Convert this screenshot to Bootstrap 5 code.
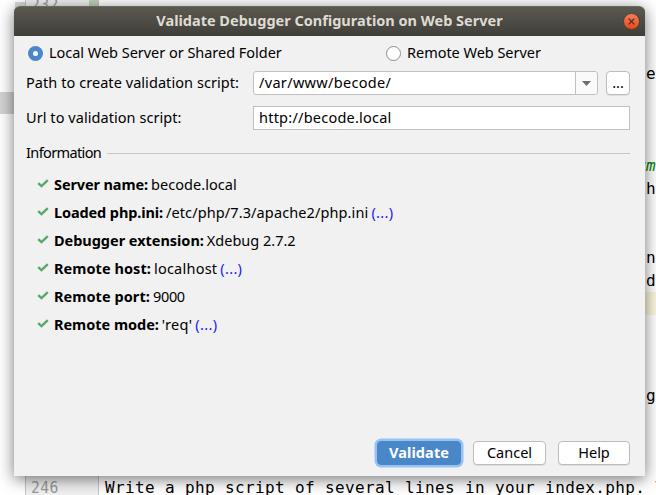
<!DOCTYPE html>
<html lang="en">
<head>
<meta charset="utf-8">
<title>Validate Debugger Configuration on Web Server</title>
<link href="https://cdn.jsdelivr.net/npm/bootstrap@5.3.0/dist/css/bootstrap.min.css" rel="stylesheet">
<style>
  body { width: 656px; height: 495px; background: #fff; color: #000; font: 14.5px/20px "Noto Sans", "Open Sans", sans-serif; }
  .editor { height: 495px; font: 16px/23px "DejaVu Sans Mono", monospace; letter-spacing: .37px; }
  .strip { width: 25px; flex: none; }
  .strip-cap { width: 10px; height: 6px; margin: 2px 0 0 15px; background: #d8d8d8; }
  .strip-thumb { width: 14px; height: 22px; margin-top: 84px; background: #d2d2d2; }
  .code-lines { margin-top: -7px; width: 631px; flex: none; }
  .line { height: 23px; flex: none; white-space: pre; }
  .line-no { width: 74px; padding-left: 5px; background: #f0f0f0; border: solid #c4c4c4; border-width: 0 1px; color: #999; flex: none; }
  .line-no span { display: inline-block; transform: scaleX(.92); transform-origin: left; }
  .line-no.changed { background: linear-gradient(90deg, #f0f0f0 63px, #bdd4b8 63px); }
  .line-text { padding-left: 6px; }
  .line.current .line-text { background: #fcf6dc; }
  .doc { color: #008000; font-style: italic; }

  .dialog-window { left: 14px; top: 6px; width: 631px; height: 470px; background: #f1f1f1; border-radius: 6px 6px 0 0; box-shadow: 0 3px 16px rgba(0,0,0,.55); }
  .titlebar { height: 30px; background: linear-gradient(#5b594f, #3f3e39); border-top: 1px solid #69675d; border-radius: 6px 6px 0 0; color: #dfdbd2; }
  .titlebar span { margin-top: -3px; }
  .titlebar .close-btn { right: 5px; top: 6px; width: 17px; height: 17px; }
  .form-area { padding: 0 15px 0 12px; }
  .choices { height: 35px; padding-left: 2px; }
  .choice { gap: 6px; }
  .fields > span, .section-title span, .check-row span, .check-row b { margin-top: -2px; }
  .choice span { margin-top: -3px; }
  .choice.first { width: 358px; }
  .fields { display: grid; grid-template-columns: 227px 1fr; row-gap: 11px; }
  .field { height: 24px; border: 1px solid #c0c0c0; background: #fff; padding-left: 5px; line-height: 20px; }
  .combo { border-radius: 3px; width: 345px; }
  .combo-arrow { width: 22px; border-left: 1px solid #c0c0c0; background: #fafafa; border-radius: 0 3px 3px 0; }
  .push { height: 24px; padding: 0 0 2px; border: 1px solid #bcbcbc; border-radius: 4px; background: #fff; color: #000; font-size: 14.5px; line-height: 20px; box-shadow: 0 1px 0 #dfdfdf; }
  .push.browse { width: 24px; }
  .push.primary { width: 84px; background: #4a87c8; border-color: #4a87c8; color: #fff; font-weight: 700; box-shadow: 0 0 0 2.5px #97c3f3; }
  .push.cancel { width: 73px; }
  .push.help { width: 72px; }
  .section-title { margin-top: 13px; height: 20px; gap: 6px; }
  .section-title .rule { height: 1px; background: #c6c6c6; }
  .checks { margin-top: 8px; padding-left: 11px; }
  .check-row { height: 28px; padding-bottom: 1px; }
  .check-row svg { margin: 0 5px 2px 0; }
  .check-row b { margin-right: 3px; }
  .check-row .more { color: #1a1af5; margin-left: 3px; letter-spacing: .33px; }
  .actions { right: 15px; bottom: 11px; gap: 12px; }
  .t-xtight { letter-spacing: -.62px; }
  .t-num { letter-spacing: -.3px; }
  .t-tight { letter-spacing: -.11px; }
  .t-snug { letter-spacing: -.03px; }
  .t-open { letter-spacing: .06px; }
  .t-wide { letter-spacing: .11px; }
  .t-wider { letter-spacing: .23px; }
  .t-path { letter-spacing: .32px; }
</style>
<script src="https://cdn.jsdelivr.net/npm/bootstrap@5.3.0/dist/js/bootstrap.bundle.min.js"></script>
</head>
<body class="position-relative overflow-hidden">
<svg class="d-none"><symbol id="tick" viewBox="0 0 12 10"><path d="M1.2 4.2 4.5 7.2 10.8 1.2" fill="none" stroke="#59a869" stroke-width="2.4"/></symbol></svg>

<div class="editor d-flex overflow-hidden">
  <div class="strip"><div class="strip-cap"></div><div class="strip-thumb"></div></div>
  <div class="code-lines">
    <div class="line d-flex"><div class="line-no changed"><span>232</span></div></div>
    <div class="line d-flex"><div class="line-no"></div></div>
    <div class="line d-flex"><div class="line-no"></div></div>
    <div class="line d-flex"><div class="line-no"></div><div class="line-text flex-grow-1 text-end">e</div></div>
    <div class="line d-flex"><div class="line-no"></div></div>
    <div class="line d-flex"><div class="line-no"></div></div>
    <div class="line d-flex"><div class="line-no"></div></div>
    <div class="line d-flex"><div class="line-no"></div><div class="line-text flex-grow-1 text-end doc">rm</div></div>
    <div class="line d-flex"><div class="line-no"></div><div class="line-text flex-grow-1 text-end">th</div></div>
    <div class="line d-flex"><div class="line-no"></div></div>
    <div class="line d-flex"><div class="line-no"></div></div>
    <div class="line d-flex"><div class="line-no"></div><div class="line-text flex-grow-1 text-end">n</div></div>
    <div class="line d-flex"><div class="line-no"></div><div class="line-text flex-grow-1 text-end">nd</div></div>
    <div class="line d-flex current"><div class="line-no"></div><div class="line-text flex-grow-1"></div></div>
    <div class="line d-flex"><div class="line-no"></div></div>
    <div class="line d-flex"><div class="line-no"></div></div>
    <div class="line d-flex"><div class="line-no"></div></div>
    <div class="line d-flex"><div class="line-no"></div><div class="line-text flex-grow-1 text-end">g</div></div>
    <div class="line d-flex"><div class="line-no"></div></div>
    <div class="line d-flex"><div class="line-no"></div></div>
    <div class="line d-flex"><div class="line-no"></div></div>
    <div class="line d-flex"><div class="line-no"><span>246</span></div><div class="line-text">Write a php script of several lines in your index.php. T</div></div>
  </div>
</div>

<div class="dialog-window position-absolute">
  <div class="titlebar position-relative d-flex align-items-center justify-content-center fw-bold">
    <span>Validate Debugger Configuration on Web Server</span>
    <svg class="close-btn position-absolute" viewBox="0 0 17 17"><defs><linearGradient id="cg" x1="0" y1="0" x2="0" y2="1"><stop offset="0" stop-color="#f5805c"/><stop offset="1" stop-color="#e2491a"/></linearGradient></defs><circle cx="8.5" cy="8.5" r="8" fill="url(#cg)" stroke="#35342f" stroke-width=".7"/><path d="m5.7 5.7 5.6 5.6m0-5.6-5.6 5.6" stroke="#4a2a1c" stroke-width="1.2"/></svg>
  </div>

  <div class="form-area">
    <div class="choices d-flex align-items-center">
      <div class="choice first d-flex align-items-center">
        <svg width="15" height="15" viewBox="0 0 15 15"><circle cx="7.5" cy="7.5" r="7.5" fill="#4a87c8"/><circle cx="7.5" cy="7.5" r="2.5" fill="#fff"/></svg>
        <span class="t-snug">Local Web Server or Shared Folder</span>
      </div>
      <div class="choice d-flex align-items-center">
        <svg width="15" height="15" viewBox="0 0 15 15"><circle cx="7.5" cy="7.5" r="7" fill="#fff" stroke="#8c8c8c"/></svg>
        <span class="t-snug">Remote Web Server</span>
      </div>
    </div>

    <div class="fields align-items-center">
      <span class="t-open">Path to create validation script:</span>
      <div class="d-flex justify-content-between">
        <div class="field combo d-flex justify-content-between">
          <span class="t-path">/var/www/becode/</span>
          <span class="combo-arrow d-flex align-items-center justify-content-center"><svg width="9" height="5" viewBox="0 0 9 5"><path d="M0 0h9L4.5 5z" fill="#6e6e6e"/></svg></span>
        </div>
        <button type="button" class="btn push browse">...</button>
      </div>
      <span class="t-open">Url to validation script:</span>
      <div class="field t-wider">http://becode.local</div>
    </div>

    <div class="section-title d-flex align-items-center"><span class="t-xtight">Information</span><div class="rule flex-grow-1"></div></div>

    <div class="checks">
      <div class="check-row d-flex align-items-center"><svg width="12" height="10"><use href="#tick"/></svg><b class="t-tight">Server name:</b><span class="t-open">becode.local</span></div>
      <div class="check-row d-flex align-items-center"><svg width="12" height="10"><use href="#tick"/></svg><b class="t-tight">Loaded php.ini:</b><span class="t-wide">/etc/php/7.3/apache2/php.ini</span><span class="more">(...)</span></div>
      <div class="check-row d-flex align-items-center"><svg width="12" height="10"><use href="#tick"/></svg><b class="t-snug">Debugger extension:</b><span>Xdebug 2.7.2</span></div>
      <div class="check-row d-flex align-items-center"><svg width="12" height="10"><use href="#tick"/></svg><b class="t-open">Remote host:</b><span class="t-wider">localhost</span><span class="more">(...)</span></div>
      <div class="check-row d-flex align-items-center"><svg width="12" height="10"><use href="#tick"/></svg><b class="t-open">Remote port:</b><span class="t-num">9000</span></div>
      <div class="check-row d-flex align-items-center"><svg width="12" height="10"><use href="#tick"/></svg><b class="t-snug">Remote mode:</b><span class="t-path">'req'</span><span class="more">(...)</span></div>
    </div>
  </div>

  <div class="actions position-absolute d-flex">
    <button type="button" class="btn push primary t-wide">Validate</button>
    <button type="button" class="btn push cancel">Cancel</button>
    <button type="button" class="btn push help">Help</button>
  </div>
</div>
</body>
</html>
